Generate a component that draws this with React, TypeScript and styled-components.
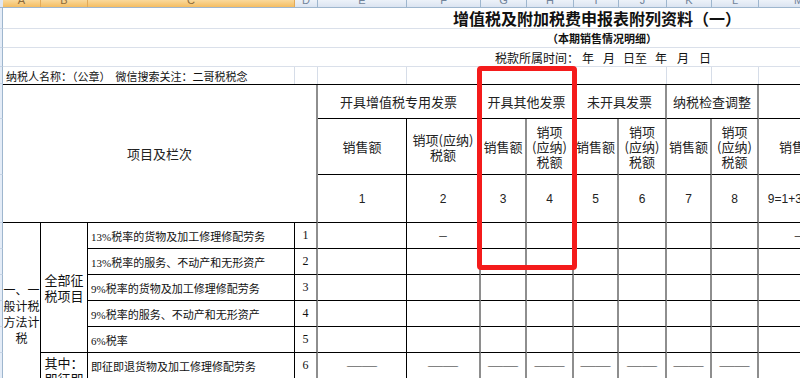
import styled, { createGlobalStyle } from "styled-components"

const COLS = "38px 47px 207px 23px 89px 74px 46px 47px 45px 48px 45px 47px 80px"
const LETTERS = ["A", "B", "C", "D", "E", "F", "G", "H", "I", "J", "K", "L", "M"]
const GUTTER_ROWS = [21, 19, 19, 17, 35, 56, 48, 26, 26, 26, 26, 26, 26, 26]
const SOFT = [4, 6, 7, 8, 9, 10, 11, 12]

type Item = { no: string, name: string, values: Record<number, string> }

const DASHES: Record<number, string> = { 5: "——", 6: "——", 7: "——", 8: "——", 9: "——", 10: "——", 11: "——", 12: "——" }

const items: Item[] = [
    { no: "1", name: "13%税率的货物及加工修理修配劳务", values: { 6: "–", 13: "–" } },
    { no: "2", name: "13%税率的服务、不动产和无形资产", values: {} },
    { no: "3", name: "9%税率的货物及加工修理修配劳务", values: {} },
    { no: "4", name: "9%税率的服务、不动产和无形资产", values: {} },
    { no: "5", name: "6%税率", values: {} },
    { no: "6", name: "即征即退货物及加工修理修配劳务", values: DASHES },
    { no: "7", name: "即征即退服务、不动产和无形资产", values: DASHES },
]

const groups = [
    { col: "5 / 7", label: "开具增值税专用发票" },
    { col: "7 / 9", label: "开具其他发票" },
    { col: "9 / 11", label: "未开具发票" },
    { col: "11 / 13", label: "纳税检查调整" },
    { col: "13 / 14", label: "" },
]

const numbers = ["1", "2", "3", "4", "5", "6", "7", "8", "9=1+3+5+7"]

export default function App() {
    return (
        <Sheet>
            <GlobalStyle />
            <ColumnBar>
                <Corner />
                {LETTERS.map((l, i) => (
                    <ColumnHead key={l} $selected={i < 3}><span>{l}</span></ColumnHead>
                ))}
            </ColumnBar>
            <Body>
                <Gutter>
                    {GUTTER_ROWS.map((h, i) => <GutterCell key={i} $h={h} />)}
                </Gutter>
                <Main>
                    <TopBlock>
                        <Banner $row={1} $pad={352} $size={16} $bold $center>增值税及附加税费申报表附列资料（一）</Banner>
                        <Banner $row={2} $pad={362} $size={11} $bold $center>（本期销售情况明细）</Banner>
                        <Banner $row={3} $pad={492} $size={12}>
                            <PeriodPart $gap={0}>税款所属时间：</PeriodPart>
                            <PeriodPart $gap={3}>年</PeriodPart>
                            <PeriodPart $gap={9}>月</PeriodPart>
                            <PeriodPart $gap={8}>日至</PeriodPart>
                            <PeriodPart $gap={8}>年</PeriodPart>
                            <PeriodPart $gap={10}>月</PeriodPart>
                            <PeriodPart $gap={10}>日</PeriodPart>
                        </Banner>
                        <PayerCell $col="1 / 4">纳税人名称：（公章）&nbsp;&nbsp;微信搜索关注：二哥税税念</PayerCell>
                        <PayerCell $col="4" />
                        <PayerCell $col="5" />
                        <PayerCell $col="6" />
                        <PayerCell $col="7 / 11" />
                        <PayerCell $col="11" />
                        <PayerCell $col="12" />
                        <PayerCell $col="13" />
                    </TopBlock>

                    <Table>
                        <HeadCell $col="1 / 5" $row="1 / 4" $soft>项目及栏次</HeadCell>
                        {groups.map(g => (
                            <HeadCell key={g.col} $col={g.col} $row="1" $soft>{g.label}</HeadCell>
                        ))}
                        {[5, 6, 7, 8, 9, 10, 11, 12, 13].map(c => (
                            <SubHeadCell key={c} $col={String(c)} $row="2" $soft={SOFT.includes(c)}>
                                {c % 2 === 1
                                    ? <Chunk>销售额</Chunk>
                                    : <p><Chunk>销项</Chunk><Chunk>(应纳)</Chunk> <Chunk>税额</Chunk></p>}
                            </SubHeadCell>
                        ))}
                        {numbers.map((n, i) => (
                            <NumberCell key={n} $col={String(i + 5)} $row="3" $soft={SOFT.includes(i + 5)}>{n}</NumberCell>
                        ))}

                        <SideCell $col="1" $row="4 / 11" $size={12}>一、一般计税方法计税</SideCell>
                        <SideCell $col="2" $row="4 / 9" $size={13}>全部征税项目</SideCell>
                        <SideCell $col="2" $row="9 / 11" $size={13}>其中：即征即退项目</SideCell>

                        {items.map((it, r) => (
                            <Row key={it.no} item={it} row={r + 4} />
                        ))}
                    </Table>
                </Main>
            </Body>
            <Highlight />
        </Sheet>
    )
}

function Row(props: { item: Item, row: number }) {
    const row = String(props.row)
    return (
        <>
            <ItemCell $col="3" $row={row}>{props.item.name}</ItemCell>
            <LineNo $col="4" $row={row} $soft>{props.item.no}</LineNo>
            {[5, 6, 7, 8, 9, 10, 11, 12, 13].map(c => (
                <DataCell key={c} $col={String(c)} $row={row} $soft={SOFT.includes(c)}>
                    {props.item.values[c] || ""}
                </DataCell>
            ))}
        </>
    )
}

const GlobalStyle = createGlobalStyle`
html, body {
    margin: 0;
    padding: 0;
    background: #fff;
    overflow: hidden;
}
body {
    font-family: "Noto Sans CJK SC", "Noto Sans", sans-serif;
    color: #111;
}
p {
    margin: 0;
}
`

const Sheet = styled.div`
position: relative;
width: 800px;
height: 378px;
overflow: hidden;
background: #fff;
`

const ColumnBar = styled.div`
display: grid;
grid-template-columns: 3px ${COLS};
height: 8px;
box-sizing: border-box;
border-bottom: 1px solid #9eb6ce;
`

const Corner = styled.div`
background: #dfe7f3;
`

const ColumnHead = styled.div<{ $selected?: boolean }>`
overflow: hidden;
text-align: center;
font: 11px/11px "Liberation Sans", sans-serif;
color: ${p => p.$selected ? "#8a6a3a" : "#71839a"};
background: ${p => p.$selected ? "linear-gradient(#f9d99c, #f4bd62)" : "linear-gradient(#edf2f9, #dbe4f1)"};
border-right: 1px solid ${p => p.$selected ? "#e3aa58" : "#9eb6ce"};
span {
    display: block;
    margin-top: -5px;
}
`

const Body = styled.div`
display: flex;
`

const Gutter = styled.div`
display: flex;
flex-direction: column;
flex: none;
width: 3px;
`

const GutterCell = styled.div<{ $h: number }>`
height: ${p => p.$h}px;
box-sizing: border-box;
background: #e4ecf7;
border-right: 1px solid #9eb6ce;
border-bottom: 1px solid #c7d4e5;
`

const Main = styled.div`
flex: none;
`

const TopBlock = styled.div`
display: grid;
grid-template-columns: ${COLS};
grid-template-rows: 21px 19px 19px 17px;
`

const Banner = styled.div<{ $row: number, $pad: number, $size: number, $bold?: boolean, $center?: boolean }>`
grid-column: 1 / -1;
grid-row: ${p => p.$row};
display: flex;
align-items: center;
justify-content: ${p => p.$center ? "center" : "flex-start"};
padding-left: ${p => p.$pad}px;
box-sizing: border-box;
border-bottom: 1px solid #dae0ea;
font-size: ${p => p.$size}px;
font-weight: ${p => p.$bold ? 700 : 400};
white-space: nowrap;
color: #111;
`

const PeriodPart = styled.span<{ $gap: number }>`
margin-left: ${p => p.$gap}px;
`

const PayerCell = styled.div<{ $col: string }>`
grid-column: ${p => p.$col};
grid-row: 4;
display: flex;
align-items: center;
padding-left: 3px;
box-sizing: border-box;
border-right: 1px solid #d6dde8;
font-size: 11px;
white-space: nowrap;
overflow: hidden;
`

const Table = styled.div`
display: grid;
grid-template-columns: ${COLS};
grid-template-rows: 34px 56px 48px repeat(7, 26px);
border-top: 1px solid #000;
`

const Cell = styled.div<{ $col: string, $row: string, $soft?: boolean }>`
grid-column: ${p => p.$col};
grid-row: ${p => p.$row};
display: flex;
align-items: center;
justify-content: center;
text-align: center;
box-sizing: border-box;
min-width: 0;
overflow: hidden;
border-right: ${p => p.$soft ? "2px solid #8e8e8e" : "1px solid #000"};
border-bottom: 1px solid #000;
`

const HeadCell = styled(Cell)`
font-size: 13px;
color: #222;
white-space: nowrap;
`

const SubHeadCell = styled(Cell)`
font-size: 13px;
line-height: 15px;
color: #222;
`

const Chunk = styled.span`
display: inline-block;
white-space: nowrap;
`

const NumberCell = styled(Cell)`
font: 12px "Liberation Sans", sans-serif;
color: #222;
white-space: nowrap;
`

const SideCell = styled(Cell)<{ $size: number }>`
font-size: ${p => p.$size}px;
line-height: 16px;
color: #111;
`

const ItemCell = styled(Cell)`
justify-content: flex-start;
padding-left: 3px;
font: 11px "Liberation Serif", "Noto Sans CJK SC", serif;
white-space: nowrap;
color: #111;
`

const LineNo = styled(Cell)`
font: 12px "Liberation Serif", serif;
color: #111;
`

const DataCell = styled(Cell)`
font: 15px "Liberation Serif", serif;
color: #222;
white-space: nowrap;
`

const Highlight = styled.div`
position: absolute;
left: 477px;
top: 66px;
width: 100px;
height: 204px;
box-sizing: border-box;
border: 5px solid #f41b1b;
border-radius: 4px;
pointer-events: none;
`
